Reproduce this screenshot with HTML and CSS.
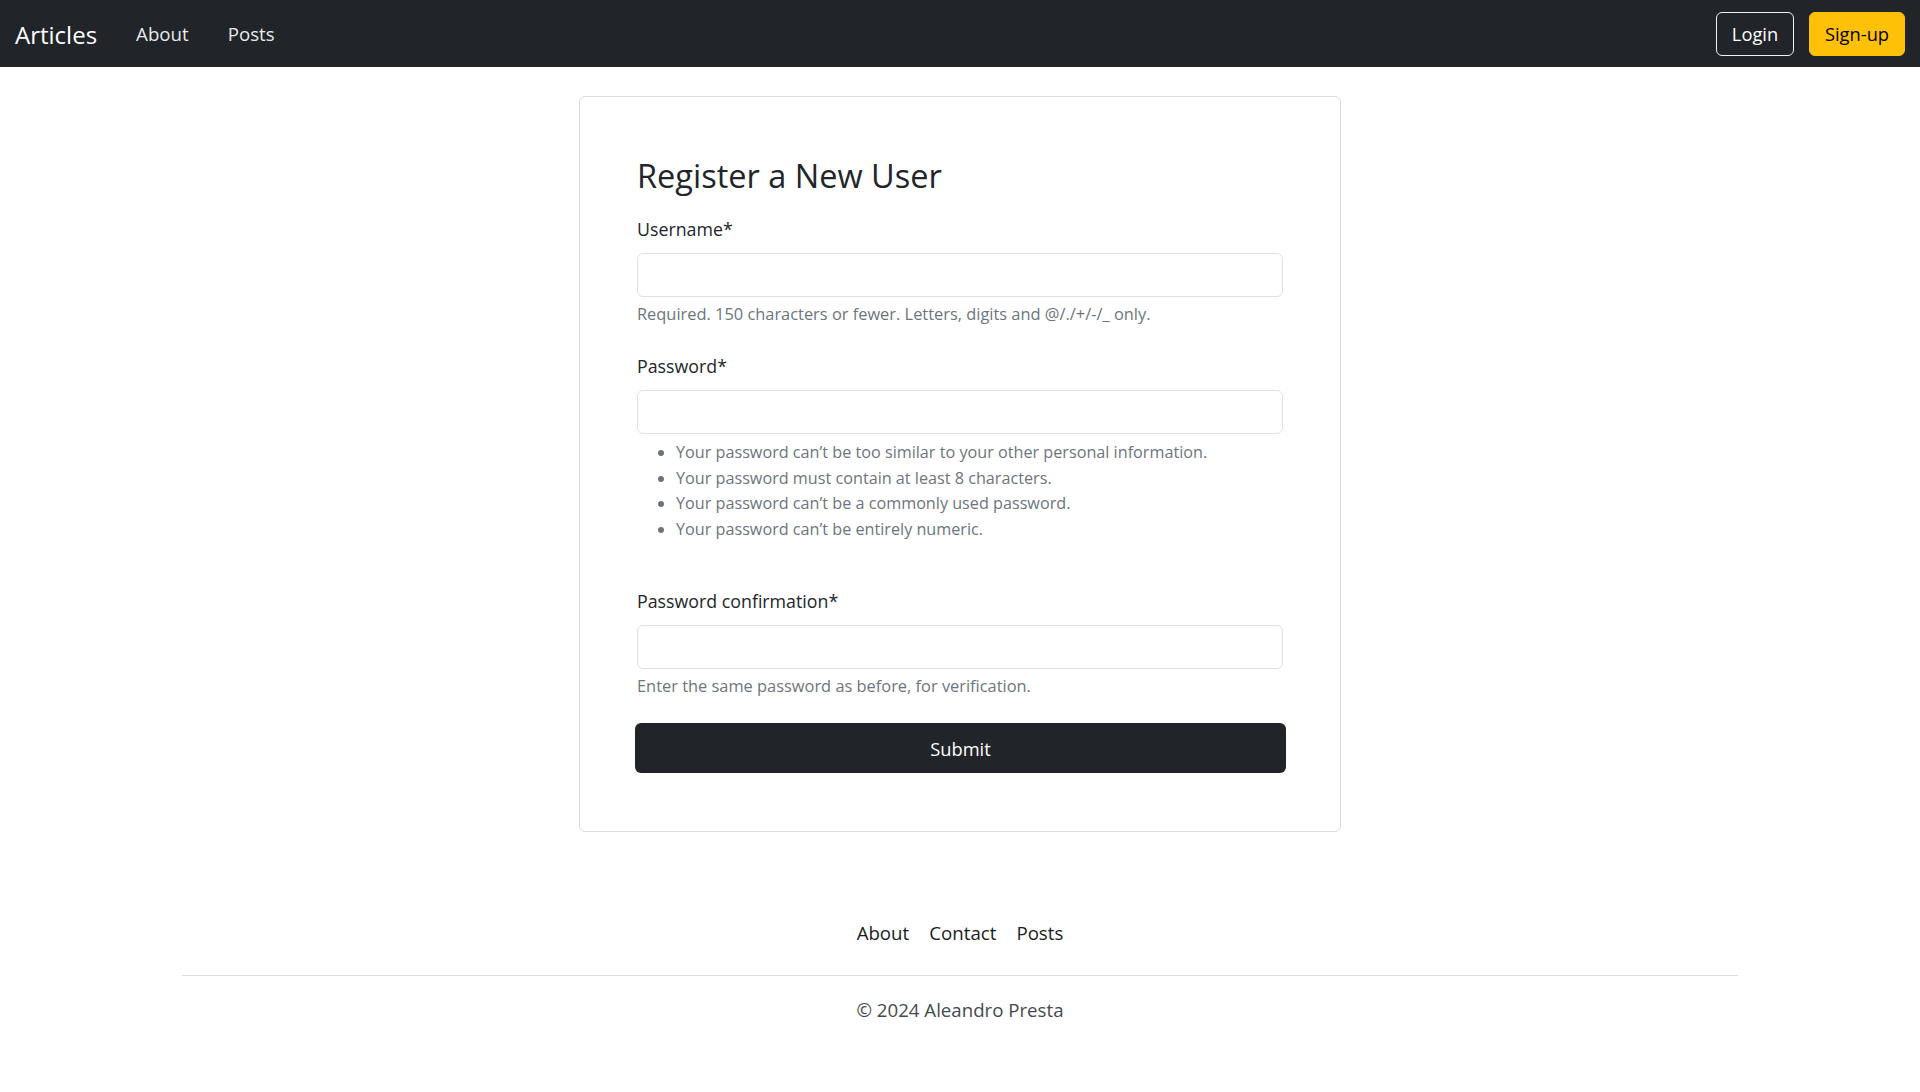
FILE: index.html
```html
<!DOCTYPE html>
<html lang="en">
<head>
<meta charset="utf-8">
<title>Register a New User</title>
<link rel="stylesheet" href="styles.css">
</head>
<body>
<header class="navbar">
  <a class="brand" href="#">Articles</a>
  <nav class="nav-main">
    <a class="nav-link" href="#">About</a>
    <a class="nav-link" href="#">Posts</a>
  </nav>
  <div class="auth">
    <a class="btn btn-login" href="#">Login</a>
    <a class="btn btn-signup" href="#">Sign-up</a>
  </div>
</header>

<main class="page">
  <section class="card">
    <h2 class="title">Register a New User</h2>
    <form class="form">
      <div class="field">
        <label class="label" for="username">Username*</label>
        <input class="input" id="username" type="text">
        <div class="help">Required. 150 characters or fewer. Letters, digits and @/./+/-/_ only.</div>
      </div>
      <div class="field field-pw">
        <label class="label" for="password1">Password*</label>
        <input class="input" id="password1" type="password">
        <ul class="rules">
          <li>Your password can’t be too similar to your other personal information.</li>
          <li>Your password must contain at least 8 characters.</li>
          <li>Your password can’t be a commonly used password.</li>
          <li>Your password can’t be entirely numeric.</li>
        </ul>
      </div>
      <div class="field field-last">
        <label class="label" for="password2">Password confirmation*</label>
        <input class="input" id="password2" type="password">
        <div class="help">Enter the same password as before, for verification.</div>
      </div>
      <button class="submit" type="button">Submit</button>
    </form>
  </section>
</main>

<footer class="footer">
  <nav class="footer-nav">
    <a class="footer-link" href="#">About</a>
    <a class="footer-link" href="#">Contact</a>
    <a class="footer-link" href="#">Posts</a>
  </nav>
  <hr class="footer-rule">
  <p class="copyright">© 2024 Aleandro Presta</p>
</footer>
</body>
</html>
```
FILE: styles.css
```css
* { box-sizing: border-box; }

html, body {
  margin: 0;
  padding: 0;
  background: #fff;
}

body {
  font-family: "Open Sans", "Noto Sans", sans-serif;
  color: #212529;
}

a { text-decoration: none; }

/* ---------- Navbar ---------- */
.navbar {
  height: 67px;
  background: #212529;
  display: flex;
  align-items: center;
  padding: 0 15px;
}

.brand {
  font-size: 24px;
  color: #fff;
  margin-right: 19.5px;
  line-height: normal;
  position: relative;
  top: 0.5px;
}

.nav-main {
  display: flex;
  align-items: center;
}

.nav-link {
  font-size: 18.7px;
  color: rgba(255, 255, 255, 0.92);
  padding: 0 19.5px;
  line-height: normal;
}

.auth {
  margin-left: auto;
  display: flex;
  gap: 15px;
}

.btn {
  height: 44px;
  display: flex;
  align-items: center;
  justify-content: center;
  font-size: 18.3px;
  border-radius: 6px;
  border: 1px solid transparent;
}

.btn-login {
  width: 78px;
  color: #fff;
  border-color: #f0f1f2;
}

.btn-signup {
  width: 96px;
  color: #000;
  background: #ffc107;
  border-color: #ffc107;
}

/* ---------- Card ---------- */
.page {
  padding-top: 29px;
}

.card {
  width: 762px;
  margin: 0 auto;
  border: 1px solid #dcdcdc;
  border-radius: 6px;
  padding: 59px 57px 57.5px;
}

.title {
  margin: 0 0 21.4px;
  font-size: 32.5px;
  line-height: 39px;
  font-weight: 400;
  color: #212529;
}

.form {
  display: flex;
  flex-direction: column;
}

.field {
  display: flex;
  flex-direction: column;
  margin-bottom: 26.8px;
}

.field-pw {
  margin-bottom: 45.8px;
}

.field-last {
  margin-bottom: 24.8px;
}

.label {
  font-size: 17.8px;
  line-height: 26.7px;
  margin-bottom: 10.4px;
  color: #212529;
}

.input {
  width: 100%;
  height: 44px;
  border: 1px solid #dee2e6;
  border-radius: 6px;
  background: #fff;
  padding: 6px 15px;
  font-family: inherit;
  font-size: 17.8px;
  outline: none;
}

.help {
  margin-top: 4.5px;
  font-size: 16.4px;
  line-height: 24.6px;
  color: #6c757d;
}

.rules {
  margin: 5.5px 0 0;
  padding-left: 39px;
  font-size: 16.2px;
  line-height: 25.6px;
  color: #6c757d;
}

.submit {
  height: 50.3px;
  margin: 0 -3px 0 -2px;
  width: calc(100% + 5px);
  border: none;
  border-radius: 6px;
  background: #212529;
  color: #fff;
  font-family: inherit;
  font-size: 18.3px;
}

/* ---------- Footer ---------- */
.footer {
  margin-top: 86.6px;
  padding: 0 182px;
}

.footer-nav {
  display: flex;
  justify-content: center;
}

.footer-link {
  font-size: 18.7px;
  line-height: 28px;
  padding: 0 10px;
  color: #1c1c1c;
}

.footer-rule {
  margin: 28.5px 0 20px;
  border: 0;
  border-top: 1px solid #dddddd;
}

.copyright {
  margin: 0;
  text-align: center;
  font-size: 18.66px;
  line-height: 28px;
  color: #45494d;
}
```
